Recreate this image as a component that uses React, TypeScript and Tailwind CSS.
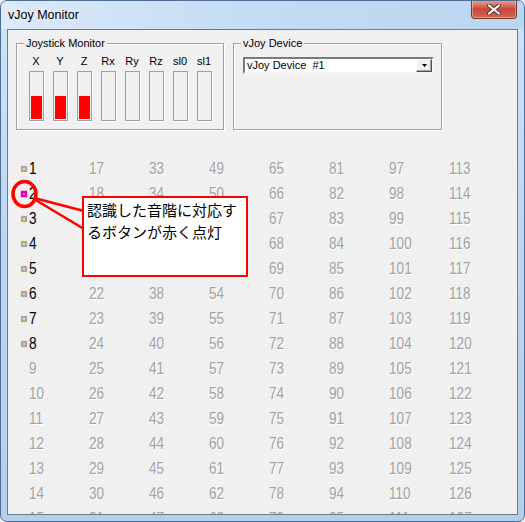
import React from "react";

const axes = ["X", "Y", "Z", "Rx", "Ry", "Rz", "sl0", "sl1"];
const filled = [true, true, true, false, false, false, false, false];

function Indicator({ on }: { on: boolean }) {
  return (
    <span
      className={
        "flex h-[8px] w-[8px] items-center justify-center rounded-[2px] " +
        (on ? "bg-[#f7b0e6]" : "bg-[#f2efb6]")
      }
    >
      <span
        className={
          "flex h-[6px] w-[6px] items-center justify-center " +
          (on ? "bg-[#e000b0]" : "bg-[#a8a8a8]")
        }
      >
        <span className={"h-[2px] w-[2px] " + (on ? "bg-[#ff60e0]" : "bg-[#d8d8d8]")} />
      </span>
    </span>
  );
}

function GroupBox({
  title,
  width,
  children,
}: {
  title: string;
  width: string;
  children: React.ReactNode;
}) {
  return (
    <div
      className={
        "relative h-[87px] border border-[#a0a0a0] shadow-[inset_1px_1px_0_#ffffff,1px_1px_0_#ffffff] " +
        width
      }
    >
      <span className="absolute -top-[7px] left-[7px] bg-[#f0f0f0] px-[2px] text-[11px] leading-[13px] text-black">
        {title}
      </span>
      {children}
    </div>
  );
}

export default function App() {
  const rows = Array.from({ length: 16 }, (_, r) => r);
  const cols = Array.from({ length: 8 }, (_, c) => c);
  return (
    <div className="relative h-[522px] w-[525px] overflow-hidden bg-[#e8eef6] font-['Liberation_Sans',sans-serif]">
      <div className="flex h-full w-full flex-col overflow-hidden rounded-[7px] border border-[#4d6d94] bg-gradient-to-b from-[#cfe2f7] via-[#bcd6f1] to-[#b4cfec]">
        {/* title bar */}
        <div className="flex h-[28px] shrink-0 items-start justify-between bg-gradient-to-r from-[#dceaf9] via-[#c3dbf4] to-[#bcd5f0] pl-[7px]">
          <span className="mt-[6px] text-[12.5px] leading-[16px] text-black [text-shadow:0_0_6px_#ffffff]">
            vJoy Monitor
          </span>
          <div className="-mt-[1px] mr-[7px] flex h-[19px] w-[46px] items-center justify-center rounded-b-[4px] border border-t-0 border-[#6e3a36] bg-gradient-to-b from-[#e5a597] via-[#c9473a] to-[#d4654f] shadow-[inset_0_0_0_1px_rgba(255,255,255,0.35)]">
            <svg width="14" height="11" viewBox="0 0 14 11">
              <path d="M2 1.5 L12 9.5 M12 1.5 L2 9.5" stroke="#5a2c28" strokeWidth="4" strokeLinecap="round" />
              <path d="M2 1.5 L12 9.5 M12 1.5 L2 9.5" stroke="#ffffff" strokeWidth="2.2" strokeLinecap="round" />
            </svg>
          </div>
        </div>
        {/* client area */}
        <div className="mx-[6px] mb-[6px] flex min-h-0 flex-1 flex-col overflow-hidden border border-[#6d7b8a] bg-[#f0f0f0]">
          <div className="mt-[13px] flex shrink-0 gap-[9px] pl-[8px]">
            <GroupBox title="Joystick Monitor" width="w-[208px]">
              <div className="flex pl-[7px] pt-[11px]">
                {axes.map((a, i) => (
                  <div key={a} className="flex w-[24px] flex-col">
                    <span className="h-[13px] w-full text-center text-[11px] leading-[13px] text-black">
                      {a}
                    </span>
                    <div className="ml-[5px] mt-[3px] flex h-[50px] w-[15px] items-end border border-[#a0a0a0] p-[1px] shadow-[1px_1px_0_#ffffff]">
                      {filled[i] && <div className="h-[23px] w-full bg-[#ff0000]" />}
                    </div>
                  </div>
                ))}
              </div>
            </GroupBox>
            <GroupBox title="vJoy Device" width="w-[209px]">
              <div className="ml-[9px] mt-[13px] flex h-[17px] w-[191px] border-2 border-b-[#f4f4f4] border-l-[#7a7a7a] border-r-[#f4f4f4] border-t-[#7a7a7a] bg-white">
                <span className="flex-1 pl-[2px] text-[11px] leading-[13px] text-black">
                  vJoy Device&nbsp; #1
                </span>
                <div className="flex h-[13px] w-[16px] items-center justify-center border border-b-[#505050] border-l-[#ffffff] border-r-[#505050] border-t-[#ffffff] bg-[#f0f0f0] shadow-[inset_-1px_-1px_0_#a0a0a0]">
                  <svg width="5" height="3" viewBox="0 0 5 3">
                    <path d="M0 0 H5 L2.5 3 Z" fill="#000000" />
                  </svg>
                </div>
              </div>
            </GroupBox>
          </div>
          {/* button grid */}
          <div className="mt-[26px] grid grid-cols-[repeat(8,60px)] pl-[12px]">
            {rows.map((r) =>
              cols.map((c) => {
                const n = c * 16 + r + 1;
                const enabled = n <= 8;
                return (
                  <div key={n} className="flex h-[25px] items-center">
                    <span className="flex w-[9px] shrink-0 items-center">
                      {enabled && <Indicator on={n === 2} />}
                    </span>
                    <span
                      className={
                        "inline-block origin-left scale-x-[0.8] text-[17px] leading-[25px] " +
                        (enabled
                          ? "text-black"
                          : "text-[#a2a2a2] [text-shadow:1px_1px_0_#ffffff]")
                      }
                    >
                      {n}
                    </span>
                  </div>
                );
              })
            )}
          </div>
        </div>
      </div>

      {/* annotation overlay */}
      <svg
        className="pointer-events-none absolute left-0 top-0"
        width="525"
        height="522"
        viewBox="0 0 525 522"
      >
        <ellipse cx="24.5" cy="194" rx="11.5" ry="12.5" fill="none" stroke="#ff0000" strokeWidth="3.5" />
        <path d="M34 198 L84 211" stroke="#ff0000" strokeWidth="2.5" />
        <path d="M34 199 L84 229" stroke="#ff0000" strokeWidth="2.5" />
      </svg>
      <div className="absolute left-[82px] top-[196px] h-[81px] w-[166px] whitespace-nowrap border-2 border-[#ff0000] bg-white pl-[3px] pt-[1px] font-['Noto_Sans_CJK_JP',sans-serif] text-[15px] leading-[22px] text-black">
        認識した音階に対応す
        <br />
        るボタンが赤く点灯
      </div>
    </div>
  );
}
